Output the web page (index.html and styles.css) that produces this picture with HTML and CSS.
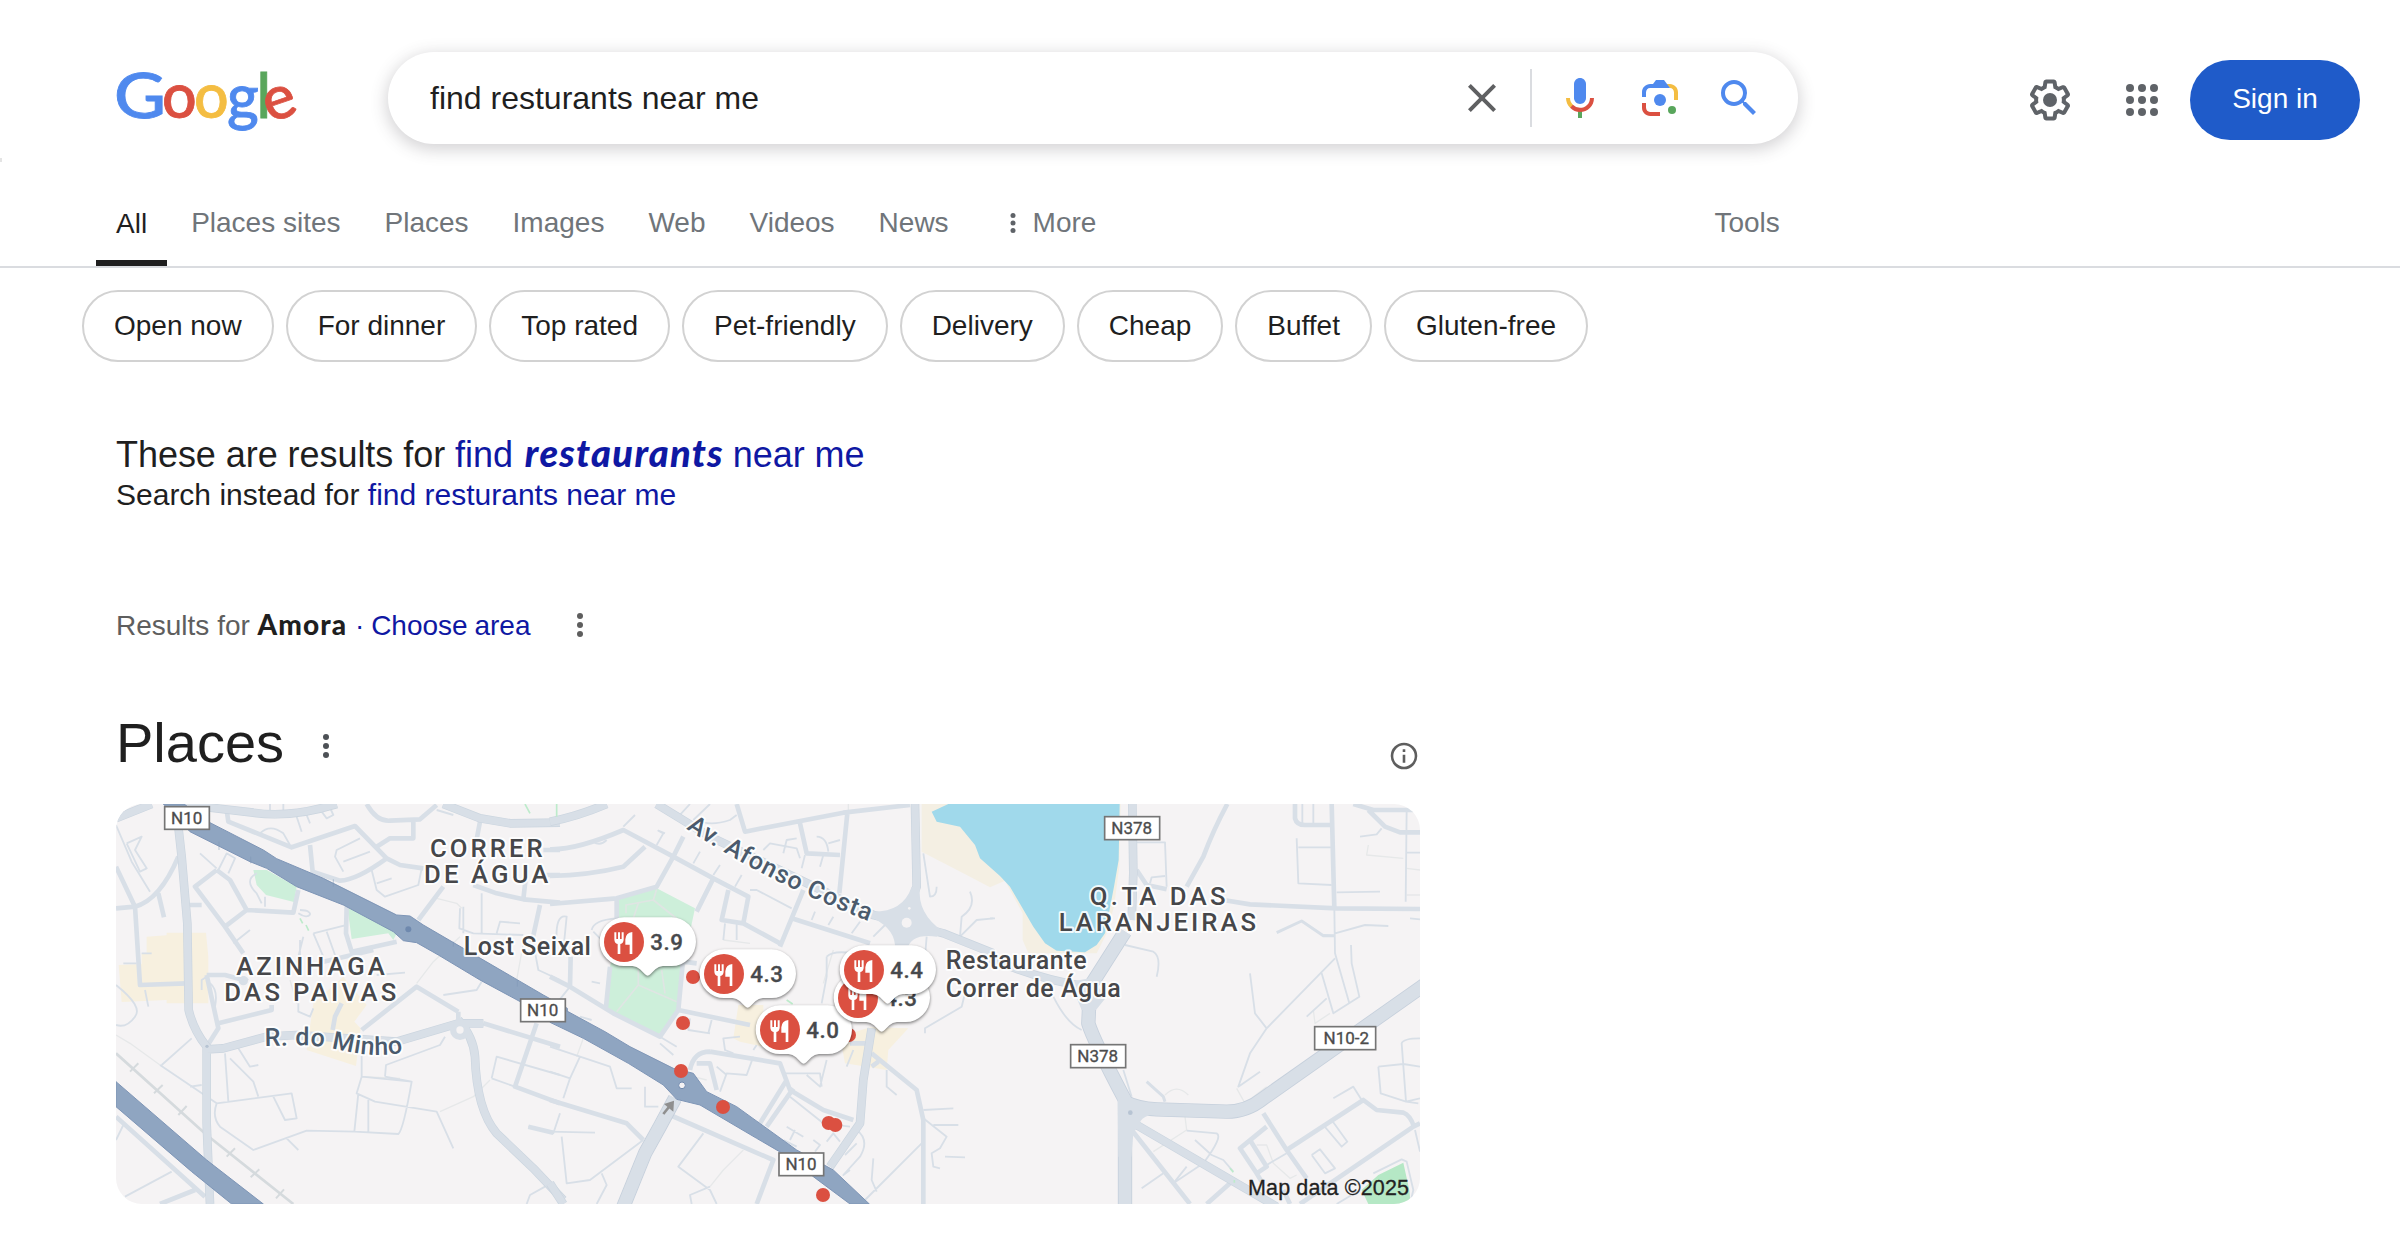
FILE: index.html
```html
<!DOCTYPE html>
<html lang="en">
<head>
<meta charset="utf-8">
<title>find resturants near me - Google Search</title>
<link rel="stylesheet" href="styles.css">
</head>
<body>
<span class="edge-mark"></span>
<header class="header">
  <svg class="logo" viewBox="0 0 200 80" role="img" aria-label="Google">
    <g class="logo-letters">
      <text x="-2" y="57.700" fill="#4f89ee" stroke="#4f89ee" textLength="52" lengthAdjust="spacingAndGlyphs">G</text>
      <text x="46" y="57.700" fill="#db5041" stroke="#db5041">o</text>
      <text x="78" y="57.700" fill="#f4bd42" stroke="#f4bd42">o</text>
      <text x="111" y="58.500" fill="#4f89ee" stroke="#4f89ee">g</text>
      <text x="140.500" y="57.700" fill="#59a65c" stroke="#59a65c">l</text>
      <text x="0" y="0" fill="#db5041" stroke="#db5041" transform="translate(153.500 63) rotate(-19)">e</text>
    </g>
  </svg>
  <form class="search">
    <span class="query">find resturants near me</span>
    <svg class="ic clear" viewBox="0 0 24 24"><path fill="#5f6062" d="M19 6.410L17.590 5 12 10.590 6.410 5 5 6.410 10.590 12 5 17.590 6.410 19 12 13.410 17.590 19 19 17.590 13.410 12z"/></svg>
    <span class="divider"></span>
    <svg class="ic mic" viewBox="0 0 24 24">
      <path fill="#4f89ee" d="M12 15c1.660 0 3-1.310 3-2.970V5.010C15 3.350 13.660 2 12 2S9 3.340 9 5.010v7.020C9 13.690 10.340 15 12 15z"/>
      <path fill="#59a65c" d="M11 18.080h2V22h-2z"/>
      <path fill="#f4bd42" d="M7.050 16.870C5.780 15.540 5 14.040 5 12h2c0 1.450.56 2.420 1.470 3.380v.32l-1.150 1.180z"/>
      <path fill="#db5041" d="M12 16.930a4.970 5.250 0 0 1-3.540-1.550l-1.410 1.490C8.310 18.210 10.080 19 12 19c3.870 0 6.990-2.920 6.990-7H17c0 2.920-2.240 4.930-5 4.930z"/>
    </svg>
    <svg class="ic lens" viewBox="0 0 192 192">
      <circle cx="144" cy="144" r="16" fill="#59a65c"/>
      <circle cx="96" cy="104" r="24" fill="#4f89ee"/>
      <path fill="#db5041" d="M24 135.200C24 153.310 38.690 168 56.800 168H96v-16H56c-8.800 0-16-8.190-16-17.900v-18H24z"/>
      <path fill="#f4bd42" d="M168 72.800C168 54.690 153.310 40 135.200 40H116l20 16c8.800 0 16 8.290 16 18v30h16z"/>
      <path fill="#4f89ee" d="M112 24H80L68 40H56.800C38.690 40 24 54.690 24 72.800V92h16V74c0-9.710 7.200-18 16-18h80z"/>
    </svg>
    <svg class="ic find" viewBox="0 0 24 24"><path fill="#4f89ee" d="M15.500 14h-.79l-.28-.27A6.470 6.470 0 0 0 16 9.500 6.500 6.500 0 1 0 9.500 16c1.610 0 3.090-.59 4.230-1.570l.27.28v.79l5 4.990L20.490 19zM9.500 14C7.010 14 5 11.990 5 9.500S7.010 5 9.500 5 14 7.010 14 9.500 11.990 14 9.500 14z"/></svg>
  </form>
  <div class="account">
    <svg class="ic" viewBox="0 0 24 24" fill="#5f6368"><path d="M13.850 22.250h-3.700c-.74 0-1.360-.54-1.450-1.270l-.27-1.890c-.27-.14-.53-.29-.79-.46l-1.800.72c-.7.26-1.470-.03-1.810-.65L2.200 15.530c-.35-.66-.2-1.440.36-1.880l1.530-1.190c-.01-.15-.02-.3-.02-.46 0-.15.01-.31.02-.46l-1.520-1.190c-.59-.45-.74-1.260-.37-1.880l1.850-3.190c.34-.62 1.110-.9 1.790-.63l1.810.73c.26-.17.52-.32.78-.46l.27-1.910c.09-.7.71-1.250 1.440-1.250h3.700c.74 0 1.360.54 1.450 1.270l.27 1.890c.27.14.53.29.79.46l1.800-.72c.71-.26 1.480.03 1.820.65l1.840 3.180c.36.66.2 1.440-.36 1.880l-1.520 1.190c.01.15.02.3.02.46s-.01.31-.02.46l1.520 1.190c.56.45.72 1.230.37 1.860l-1.860 3.220c-.34.62-1.110.9-1.800.63l-1.800-.72c-.26.17-.52.32-.78.46l-.27 1.910c-.1.68-.72 1.220-1.460 1.220zm-3.230-2h2.760l.37-2.550.53-.22c.44-.18.88-.44 1.340-.78l.45-.34 2.380.96 1.380-2.400-2.030-1.580.07-.56c.03-.26.06-.51.06-.78s-.03-.53-.06-.78l-.07-.56 2.030-1.580-1.390-2.400-2.390.96-.45-.35c-.42-.32-.87-.58-1.330-.77l-.52-.22-.37-2.550h-2.760l-.37 2.550-.53.21c-.44.19-.88.44-1.340.79l-.45.33-2.380-.95-1.390 2.390 2.030 1.580-.07.56a7 7 0 0 0-.06.79c0 .26.02.53.06.78l.07.56-2.030 1.580 1.380 2.400 2.390-.96.45.35c.43.33.86.58 1.330.77l.53.22z"/><circle cx="12" cy="12" r="3.500"/></svg>
    <svg class="ic apps" viewBox="0 0 24 24" fill="#5f6368"><circle cx="6" cy="6" r="2"/><circle cx="12" cy="6" r="2"/><circle cx="18" cy="6" r="2"/><circle cx="6" cy="12" r="2"/><circle cx="12" cy="12" r="2"/><circle cx="18" cy="12" r="2"/><circle cx="6" cy="18" r="2"/><circle cx="12" cy="18" r="2"/><circle cx="18" cy="18" r="2"/></svg>
    <a class="signin">Sign in</a>
  </div>
</header>

<nav class="tabs">
  <a class="tab active">All</a>
  <a class="tab">Places sites</a>
  <a class="tab">Places</a>
  <a class="tab">Images</a>
  <a class="tab">Web</a>
  <a class="tab">Videos</a>
  <a class="tab">News</a>
  <a class="tab more"><svg class="dots" viewBox="0 0 6 24"><circle cx="3" cy="3" r="3"/><circle cx="3" cy="12" r="3"/><circle cx="3" cy="21" r="3"/></svg>More</a>
  <a class="tab tools">Tools</a>
</nav>

<div class="chips">
  <a class="chip">Open now</a><a class="chip">For dinner</a><a class="chip">Top rated</a><a class="chip">Pet-friendly</a><a class="chip">Delivery</a><a class="chip">Cheap</a><a class="chip">Buffet</a><a class="chip">Gluten-free</a>
</div>

<main class="results">
  <p class="fixed-query">These are results for <a>find <b>restaurants</b> near me</a></p>
  <p class="instead">Search instead for <a>find resturants near me</a></p>
  <div class="location">
    <span>Results for <b>Amora</b> <a class="choose">· Choose area</a></span>
    <svg class="dots tall" viewBox="0 0 6 24"><circle cx="3" cy="3" r="3"/><circle cx="3" cy="12" r="3"/><circle cx="3" cy="21" r="3"/></svg>
  </div>
  <div class="places-head">
    <h2>Places</h2>
    <svg class="dots tall" viewBox="0 0 6 24"><circle cx="3" cy="3" r="3"/><circle cx="3" cy="12" r="3"/><circle cx="3" cy="21" r="3"/></svg>
    <svg class="info" viewBox="0 0 28 28"><circle cx="14" cy="14" r="12" fill="none" stroke="#5e5e5e" stroke-width="2.600"/><path fill="#5e5e5e" d="M12.700 12.700h2.600v8h-2.600zM12.700 7.300h2.600v2.700h-2.600z"/></svg>
  </div>

  <svg class="map" viewBox="0 0 1304 400" role="img" aria-label="Map of Amora">
    <defs>
      <g id="pin">
        <path class="bubble" d="M0-74H143A73 73 0 0 1 143 72H117Q104 73 94 82L79 97Q71 105 63 97L48 82Q38 73 25 72H0A73 73 0 0 1 0-74Z"/>
        <circle r="60" fill="#db5041"/>
        <path fill="#fff" d="M-29-29h6v20h5v-20h6v20h5v-20h6V-8Q-1 4-11 6V36h-8V6Q-29 4-29-8zM25-30V36h-8V8H4V-8Q5-27 25-30z"/>
      </g>
      <path id="minho" d="M464 768C540 768 590 762 650 772S790 808 884 786"/>
      <path id="afonso" d="M408 116C560 215 740 312 966 397"/>
    </defs>

    <!-- water, beaches, parks and built-up areas -->
    <g transform="translate(874 -14) scale(.33333)">
      <path fill="#f4efe3" d="M-205 42V185L-70 255 0 292 45 272 98 370V450L115 490H320L350 430 372 350 388 230 392 42z"/>
      <path fill="#a0d9eb" d="M-125 42-175 65-160 95-90 110-45 165-30 205 30 258 60 290 130 410 165 460 200 482 285 487 320 465 345 430 372 290 386 210 389 42z"/>
      <path fill="#b5e8c5" d="M1240 1118 1258 1200 1262 1242H1135L1115 1200 1165 1155z"/>
    </g>
    <g transform="translate(-6 -14) scale(.33333)">
      <path fill="#f7f0df" d="M110 440 170 436V428H288L295 500V640H170V630L35 636 26 525 95 522V490L110 488zM610 640 700 560 770 645 733 695 752 715 738 828 590 780z"/>
      <path fill="#cdefda" d="M430 240H470L560 290 552 336 468 315 440 285zM712 350 860 430 850 450 835 430 725 447z"/>
    </g>
    <g transform="translate(434 -14) scale(.33333)">
      <path fill="#cdefda" d="M205 325 320 295 435 355 400 520 380 670 325 735 172 655 180 530 208 400z"/>
      <path fill="#f7f0df" d="M565 645H640V770L570 755 550 745zM870 740 960 712 1075 715 1015 780 1010 840 885 820z"/>
      <path class="path" d="M228 370V345L310 330 385 390M320 298 310 330M265 540V585L380 635M265 585 200 665M335 540 345 610M265 340 245 400"/>
    </g>

    <!-- west -->
    <g transform="translate(-6 -14) scale(.33333)">
      <path class="faint" d="M18 735 60 760 150 825M540 570 560 640M980 325 1040 340 1055 355M920 580 970 515 1050 440M990 965 1090 920 1140 870M1240 460 1220 570M755 860 870 865"/>
      <path class="r1" d="M18 105 65 215 120 305M50 160 95 140 75 180 110 235 90 245 50 160M270 190 320 235M325 240 350 190 375 205 355 250M450 130Q480 100 520 130L540 165M480 42V60M520 42V60M600 100 590 75M560 80 575 125M635 65 650 85 670 75 655 42M750 145 680 180 675 200 700 245M700 215 780 185M785 240 800 300 825 320 925 285 935 235M800 280 845 265M980 60 1030 75M610 430 690 410 710 405M610 430 640 500M650 425 675 495M570 360C620 360 600 395 565 370M440 250Q400 270 440 310L455 340M465 320V350M370 460 420 420M570 450V500M1060 350V430M1050 355 1048 415 1090 430 1240 435M1115 310V430M1160 430 1170 395 1230 400M1270 460 1285 540 1350 570M800 555 885 548M580 440 560 520M95 490H125M40 520H80M18 585Q100 650 75 680 50 715 18 705M105 600 115 650M275 600V570L290 560M300 580Q325 600 315 650M400 560 415 570M565 640V665L600 680 610 655M155 825 245 745M150 825 320 940 545 910 560 985 525 990 490 920M345 790 355 935M360 805 430 875 445 920M385 775 420 830 445 825M320 940Q305 980 330 1010L430 1080 590 1022 735 1025 865 1032Q880 1020 905 875L755 860 740 910 795 935 980 965 1030 1075M755 780V860M745 910 733 1025M775 930 775 1025M530 1045 565 1080M825 860 828 825 990 765 1005 740M825 860 905 875M1000 615 1100 600 1115 575M1145 865 1160 800 1350 855M1145 865 1215 890M1350 970 1330 1030 1255 1010M240 890 275 885M45 1220 185 1145M18 1050 40 1005M1250 1242 1260 1215 1305 1190"/>
      <path class="rail" d="M18 790 290 1035 550 1242"/>
      <path class="tick" d="M60 845 85 820M132 910 158 885M205 975 230 948M350 1100 375 1075M422 1162 448 1138M498 1225 522 1198"/>
      <path class="r2" d="M350 60 355 95 545 172 735 108 830 205 870 225 940 235M770 42Q800 95 840 92L930 88 980 45M910 88V145H840L800 170M600 165 608 245 690 272Q740 270 830 205M1110 95 1090 200M1000 290 925 390M1090 285 1160 310 1240 328 1350 338M1240 328 1250 240M1300 180H1350M1290 255H1350M18 230 75 350 18 355M75 350Q150 330 205 200M75 350 90 585 230 580M320 240 255 290 345 410 400 490M320 240 360 270 410 360 345 410M410 360 550 368 565 300M710 350 708 430 725 485 860 455M235 345H275M290 555 325 715 290 770M325 700 485 660V645M290 555H345L400 570M755 720 920 590 1045 665M1290 345 1265 460M1280 700 1215 890 1350 940M145 310 162 382M18 980 285 1220M150 1242 255 1200M1120 700 1350 770M1255 1010 1330 1028M640 515 790 480"/>
      <path class="r3c" d="M205 110 215 200 232 400 236 660Q250 720 290 770V1000L300 1242M290 778 340 775 470 740 560 735 860 755 1045 700 1120 700M1045 690Q1090 740 1095 800 1100 960 1160 1030L1270 1135 1360 1230M18 85 125 42M225 44 430 68Q540 85 680 42M1000 42 1110 85 1200 100 1350 98"/>
      <path class="r3" d="M205 110 215 200 232 400 236 660Q250 720 290 770V1000L300 1242M290 778 340 775 470 740 560 735 860 755 1045 700 1120 700M1045 690Q1090 740 1095 800 1100 960 1160 1030L1270 1135 1360 1230M18 85 125 42M225 44 430 68Q540 85 680 42M1000 42 1110 85 1200 100 1350 98"/>
      <path class="r2" d="M668 720 675 680 695 640M1045 665V690"/>
      <circle cx="1050" cy="720" r="30" fill="#d8dfe7"/><circle cx="1050" cy="720" r="11" fill="#f5f3f4"/><circle cx="291" cy="769" r="5" fill="#b7c4d3"/>
      <circle cx="400" cy="572" r="14" fill="#d8dfe7"/>
      <path class="garden" d="M1245 42 1260 70M570 385 578 400M588 405 596 422"/>
      <path class="hw" d="M160 42H222L300 98 460 180 500 206 640 265 860 375 900 378 940 405 1060 475 1300 615 1372 655V720L1240 640 1110 570 985 495 920 458 880 452 850 425 700 345 560 290 470 235 420 215 240 125z"/>
      <path class="hw" d="M18 875 290 1110 460 1242H365L245 1145 18 950z"/>
      <path stroke="#7e95b5" stroke-width="1.500" fill="none" d="M327 180V155M422 220V200M670 290V268M1030 470V455M1222 590V570"/>
      <circle cx="895" cy="418" r="9" fill="#6f89ae"/>
    </g>

    <!-- centre -->
    <g transform="translate(434 -14) scale(.33333)">
      <path class="faint" d="M895 42V65M520 450 600 460M100 745 80 800M820 580 850 480M480 1190 520 1140 580 1080M430 860 470 870"/>
      <path class="r1" d="M220 110 255 75M385 80 420 42M320 165 340 130 325 122 345 130M130 155Q150 170 170 150M430 220 450 185M490 255 510 225M440 90Q480 110 540 90L560 75M480 42 430 90M700 190 710 150 740 145M640 180 660 160 740 175 750 205M800 140Q830 140 835 185M835 160 870 150M820 195 810 230M765 195 755 235M555 290 575 255M600 300 620 300 725 355M525 400 520 450M560 400V450M20 460Q15 370 50 380L40 480M125 420Q130 390 200 385M130 425 150 445M150 580 125 575M785 390 795 365M835 405 850 380M905 430 930 395M970 440 1005 405M1120 190 1140 320Q1160 320 1160 290M1260 305Q1280 350 1235 380L1230 440M1230 440 1280 390 1330 385M1130 440 1125 500M830 500Q850 480 910 490M830 500V560L815 640M1125 730V715L1235 650 1245 610M475 730 485 690M420 685 415 720 480 730M570 740 520 745 525 780 550 790M620 765 610 780M330 740 380 770M330 760 370 795M90 680 125 690M60 590 20 640M0 770 90 800 180 830 200 895 245 895M90 800 60 865 40 925M60 865 0 845M285 890V950L325 950M0 1025 135 1028M35 1040 50 1180 120 1170 280 1050M510 905 530 850 590 855 610 800M530 855 500 830M700 850H810L815 890M770 855 810 890 830 810M890 830 910 780M720 920 820 1000 900 1010M710 1010 760 1040M700 1050 740 1070M735 1020 720 1050M790 1050 810 1065 795 1085M830 1055 850 1030 870 1055M920 1020Q960 1050 930 1100L880 1155 900 1140M885 1095 920 1060M1010 840V890L1040 915M1120 960 1210 955M1120 985 1190 1040 1170 1075 1145 1090 1150 1130 1170 1135M1150 1005H1225M1185 1100 1245 1102M1115 1060 945 1230M970 1105 965 1170 980 1205M460 1030 385 1130 480 1200 500 1242M425 1242 420 1215 480 1190M155 1150 170 1185 140 1242"/>
      <path class="r2" d="M0 178Q80 180 220 120L370 200 490 265 595 320 580 400 690 460M0 258Q120 255 220 230L285 170M0 342 200 325 320 290 370 200 400 140M490 265 440 365M535 300 515 390 580 400M690 470 760 300M725 385 960 460M560 42 585 125 880 68 1080 45M892 70 868 310M750 100 770 190 870 195M400 500 385 660 330 740 190 670 60 590 0 560M62 500 60 590M200 325V400M180 530 168 650M385 660 600 705M440 520 400 515M480 785 690 820 720 900 820 960 910 990M420 840Q430 785 480 785M440 820H480L500 900M710 870 630 1000M730 895 650 1010M360 975 670 1110 620 1242M0 930 230 1000 280 1050M965 790 1100 900 1120 990V1242M965 830 985 815M945 760 900 760"/>
      <path class="r3c" d="M0 95Q80 80 170 42M320 42 480 140 970 375 1070 400 1180 430 1330 490M1095 42 1100 290Q1080 340 1070 395L1050 480M965 715 940 870 930 1000 840 1130M0 1180 40 1242"/>
      <path class="r3" d="M0 95Q80 80 170 42M320 42 480 140 970 375 1070 400 1180 430 1330 490M1095 42 1100 290Q1080 340 1070 395L1050 480M965 715 940 870 930 1000 840 1130M0 1180 40 1242"/>
      <path class="r4c" d="M375 925Q330 1010 285 1090L220 1250"/><path class="r4" d="M375 925Q330 1010 285 1090L220 1250"/>
      <path fill="#d8dfe7" d="M970 365Q1060 365 1085 290H1110Q1100 370 1180 425L1160 440Q1080 430 1072 480H1035Q1040 420 970 385z"/>
      <circle cx="1070" cy="398" r="15" fill="#f5f3f4"/><circle cx="1078" cy="355" r="4" fill="#f5f3f4"/>
      <path class="hw" d="M0 640 45 660 165 725 240 770 370 835 430 850 470 905 560 950 740 1080 850 1140 958 1242H900L790 1160 740 1115 620 1045 450 945 380 928 340 885 235 820 100 745 0 697z"/>
      <circle cx="396" cy="886" r="10" fill="#f5f3f4" stroke="#6f89ae" stroke-width="3"/>
      <path stroke="#8f8f8f" stroke-width="8" fill="none" d="M340 972 364 942"/><path fill="#8f8f8f" d="M342 942 372 932 370 965z"/>
      <path class="garden" d="M20 42V80M710 630 728 642"/>
    </g>

    <!-- east -->
    <g transform="translate(874 -14) scale(.33333)">
      <path class="faint" d="M1135 165 1130 195 1240 205M1250 235 1290 240M1250 315H1290M970 660 975 700 1020 670M740 895 765 940 830 890M525 915Q560 880 595 915M585 980 590 1020 490 1085M800 1065H830L850 1120 900 1165 920 1155"/>
      <path class="r1" d="M440 157H525L530 290M480 280 485 262 525 258M405 465 490 485Q515 500 500 560M190 620Q230 700 275 720M0 385H15M400 840 425 920M780 550 795 670 830 715M1035 505 830 715 780 790 745 890 810 845M1033 355 1035 490 1078 640M1035 430 1125 405 1195 408M1000 435 1035 438M1083 465 1085 520 1108 620 1030 670 995 550M950 680 1010 625M1040 307 1170 305M920 145 925 280 1025 285M925 172H1025M970 42V100M937 42V100M1250 60 1247 335M1250 188H1290M1110 140 1160 133 1175 115M1260 385 1290 388M1290 745Q1240 745 1235 760L1248 935 1285 940M1165 830 1240 822 1290 830M1165 830 1172 910 1248 935 1290 925M1030 925 1090 890 1115 930M1000 1005 1055 1070 1072 1055 1025 990M965 1095 990 1078 1035 1135 1005 1150 965 1095M590 1022 680 1030Q700 1040 640 1120L550 1180M615 1050 665 1095 700 1110 730 1145M455 1195 520 1150M590 1130 550 1180M830 1125 890 1090M1260 1242 1270 1200 1250 1115 1235 1108 1150 1150M1275 1020 1290 1085M1040 1242 1110 1200"/>
      <path class="r2" d="M712 42Q670 120 640 200L590 290M440 240 470 285 530 298M700 330 780 343 1040 355 1290 357M1025 42 1033 355M915 42V85Q920 105 945 105H1025M1090 42 1150 60H1290M1135 60 1185 110 1230 127H1290M820 970 890 1080 950 1165M890 1080 1120 930 1160 960 1240 968Q1260 975 1272 1010M1290 1000 1270 1010 930 1242M830 1010 750 1075 800 1150M780 1050 830 1130 800 1150 815 1175M720 1180 650 1242M425 1020 600 1242M880 1200 900 1242"/>
      <path class="r1b" d="M860 428 935 393 1000 437 1033 437M470 875 520 920 525 935"/>
      <path class="r3c" d="M427 42 430 250 425 390M440 1005 860 1250M0 505Q150 570 290 590"/>
      <path class="r3" d="M427 42 430 250 425 390M440 1005 860 1250M0 505Q150 570 290 590"/>
      <path class="r4c" d="M405 425 300 590 295 700Q310 750 405 930V1250M405 935Q440 955 500 958L710 965Q770 965 820 925L1310 580"/>
      <path class="r4" d="M405 425 300 590 295 700Q310 750 405 930V1250M405 935Q440 955 500 958L710 965Q770 965 820 925L1310 580"/>
      <path fill="#d8dfe7" d="M383 920 430 930 480 975Q450 985 450 1000L430 1030 424 1100H385zM240 575 300 565 350 620 318 660H275z"/>
      <circle cx="421" cy="968" r="7" fill="#b7c4d3"/>
      <path class="garden" d="M720 1135 730 1147M733 1170V1178"/>
    </g>

    <!-- road shields -->
    <g class="shields" transform="translate(-6 -14) scale(.33333)">
      <rect x="164" y="50" width="134" height="68"/><text x="230" y="102">N10</text>
      <rect x="1232" y="627" width="134" height="68"/><text x="1298" y="679">N10</text>
      <rect x="2007" y="1089" width="134" height="68"/><text x="2073" y="1141">N10</text>
      <rect x="2984" y="80" width="165" height="69"/><text x="3065" y="132">N378</text>
      <rect x="2882" y="764" width="165" height="69"/><text x="2963" y="816">N378</text>
      <rect x="3614" y="710" width="183" height="69"/><text x="3709" y="762">N10-2</text>
    </g>

    <!-- labels -->
    <g class="labels" transform="translate(-6 -14) scale(.33333)">
      <g class="area">
        <text x="960" y="202" textLength="338">CORRER</text>
        <text x="942" y="280" textLength="373">DE ÁGUA</text>
        <text x="379" y="556" textLength="445">AZINHAGA</text>
        <text x="343" y="633" textLength="516">DAS PAIVAS</text>
        <text x="2939" y="346" textLength="408">Q.TA DAS</text>
        <text x="2846" y="423" textLength="592">LARANJEIRAS</text>
      </g>
      <text x="1061" y="495" textLength="382">Lost Seixal</text>
      <text x="2507" y="537" textLength="423">Restaurante</text>
      <text x="2507" y="620" textLength="525">Correr de Água</text>
      <text class="street"><textPath href="#minho" textLength="418">R. do Minho</textPath></text>
    </g>
    <g class="labels" transform="translate(434 -14) scale(.33333)">
      <text class="street"><textPath href="#afonso" textLength="615">Av. Afonso Costa</textPath></text>
    </g>

    <!-- places -->
    <g class="pins" transform="translate(434 -14) scale(.33333)">
      <g fill="#db5041">
        <circle cx="429" cy="561" r="21"/><circle cx="399" cy="699" r="21"/><circle cx="393" cy="843" r="21"/><circle cx="519" cy="951" r="21"/>
        <circle cx="836" cy="999" r="21"/><circle cx="856" cy="1005" r="21"/><circle cx="819" cy="1215" r="21"/><circle cx="897" cy="735" r="21"/>
      </g>
      <use href="#pin" x="222" y="456"/><text x="301" y="480">3.9</text>
      <use href="#pin" x="522" y="552"/><text x="601" y="576">4.3</text>
      <use href="#pin" x="690" y="720"/><text x="769" y="744">4.0</text>
      <use href="#pin" x="924" y="624"/><text x="1003" y="648">4.3</text>
      <use href="#pin" x="942" y="540"/><text x="1021" y="564">4.4</text>
    </g>
    <text class="credit" x="1132" y="391" textLength="161">Map data ©2025</text>
  </svg>
</main>
</body>
</html>
```
FILE: styles.css
```css
* { box-sizing: border-box; }
body {
  margin: 0;
  width: 2400px;
  height: 1236px;
  overflow: hidden;
  position: relative;
  background: #fff;
  color: #1f1f1f;
  font: 28px/36px "Liberation Sans", Arial, sans-serif;
}
p, h2 { margin: 0; font-weight: 400; }
svg { display: block; flex: none; }
.edge-mark { position: absolute; left: 0; top: 158px; width: 2px; height: 4px; background: #e4e4e4; }

.header { display: flex; height: 200px; padding-left: 116px; }
.logo { width: 200px; height: 80px; margin: 60px 72px 0 0; overflow: visible; }
.logo-letters { font-family: Lato, sans-serif; font-weight: 500; font-size: 61px; stroke-width: .8px; }
.search {
  display: flex;
  align-items: center;
  width: 1410px;
  height: 92px;
  margin-top: 52px;
  padding-left: 42px;
  border-radius: 46px;
  background: #fff;
  box-shadow: 0 4px 16px 2px rgba(64, 60, 67, .22);
}
.query { width: 1028px; font-size: 32px; line-height: 40px; margin-top: -1px; white-space: nowrap; }
.ic { width: 48px; height: 48px; }
.divider { width: 2px; height: 58px; margin: 0 24px; background: #dadce0; }
.lens { margin: 0 31px 0 32px; }
.account { display: flex; align-items: center; height: 80px; margin: 60px 0 0 228px; }
.apps { margin: 0 24px 0 44px; }
.signin {
  width: 170px;
  height: 80px;
  border-radius: 40px;
  background: #1f5bc9;
  color: #fff;
  text-align: center;
  line-height: 77px;
}

.tabs {
  position: relative;
  display: flex;
  gap: 4px;
  height: 68px;
  padding-left: 96px;
  border-bottom: 2px solid #dadce0;
  color: #70757a;
}
.tab { padding: 5px 20px 0; height: 66px; white-space: nowrap; }
.tab.active { padding-top: 6px; border-bottom: 6px solid #1f1f1f; color: #1f1f1f; }
.more { display: flex; margin-left: 17px; gap: 17px; }
.dots { width: 6px; height: 20px; margin-top: 8px; fill: #5f6368; }
.dots.tall { width: 6px; height: 24px; margin: 0; }
.tools { margin-left: 574px; }

.chips { display: flex; gap: 12px; padding: 22px 0 0 82px; }
.chip {
  height: 72px;
  padding: 0 30px;
  border: 2px solid #d2d2d2;
  border-radius: 36px;
  line-height: 68px;
  white-space: nowrap;
}

.results { width: 1304px; margin: 71px 0 0 116px; }
.results a { color: #0f18a3; }
.fixed-query { height: 43px; font-size: 36px; line-height: 44px; letter-spacing: -.05px; white-space: nowrap; }
.fixed-query b { display: inline-block; width: 200px; padding-left: 2px; font: italic 900 38px/30px Lato, sans-serif; letter-spacing: 1.300px; }
.instead { font-size: 30px; line-height: 38px; white-space: nowrap; }
.location { display: flex; align-items: center; gap: 47px; height: 40px; margin-top: 92px; color: #5e5e5e; }
.location b { font: 900 28px/30px Lato, sans-serif; letter-spacing: 1.100px; color: #1f1f1f; }
.location .choose { word-spacing: -1px; }
.location .dots { fill: #5e5e5e; margin-top: -2px; }
.places-head { display: flex; align-items: center; height: 80px; margin-top: 58px; }
.places-head h2 { font-size: 56px; line-height: 72px; margin: -2px 39px 0 0; }
.places-head .dots { margin-top: 4px; fill: #4d5156; }
.info { width: 28px; height: 28px; margin: 24px 2px 0 auto; }

.map { width: 1304px; height: 400px; margin-top: 20px; border-radius: 26px; background: #f5f3f4; font-family: Roboto, sans-serif; }
.map path.faint, .map path.path, .map path.r1, .map path.r1b, .map path.r2, .map path.r3, .map path.r3c,
.map path.r4, .map path.r4c, .map path.rail, .map path.tick, .map path.garden { fill: none; stroke-linejoin: round; stroke: #d8dfe7; }
.map path.faint { stroke: #e6e8e9; stroke-width: 4; }
.map path.path { stroke: #dfe5e3; stroke-width: 5; }
.map path.r1 { stroke-width: 5.500; }
.map path.r1b { stroke-width: 9; }
.map path.r2 { stroke-width: 14; }
.map path.r3 { stroke-width: 22; }
.map path.r3c { stroke: #cbd5df; stroke-width: 26; }
.map path.r4 { stroke-width: 38; }
.map path.r4c { stroke: #c6d0dc; stroke-width: 43; }
.map path.rail { stroke: #d5dadd; stroke-width: 8; }
.map path.tick { stroke: #d5dadd; stroke-width: 6; }
.map path.garden { stroke: #bdebcb; stroke-width: 5; }
.map path.hw { fill: #8fa5c1; stroke: #7d95b6; stroke-width: 3; }
.shields rect { fill: #fff; stroke: #757575; stroke-width: 5; }
.shields text { font-size: 51px; font-weight: 400; fill: #4c4c4c; stroke: #4c4c4c; stroke-width: 1; text-anchor: middle; }
.labels text { font-size: 75px; font-weight: 500; fill: #46474a; stroke: #fff; stroke-opacity: .85; stroke-width: 12; stroke-linejoin: round; paint-order: stroke; }
.labels .area text { font-size: 77px; }
.labels text.street { fill: #4a5a6c; }
.bubble { fill: #fff; filter: drop-shadow(0 4px 4px rgba(0, 0, 0, .5)); }
.pins text { font-size: 67px; font-weight: 500; fill: #47494c; stroke: #47494c; stroke-width: 1; letter-spacing: 1.500px; }
.credit { font: 21.500px "Liberation Sans", Arial, sans-serif; fill: #222; stroke: #222; stroke-width: .3px; }
```
